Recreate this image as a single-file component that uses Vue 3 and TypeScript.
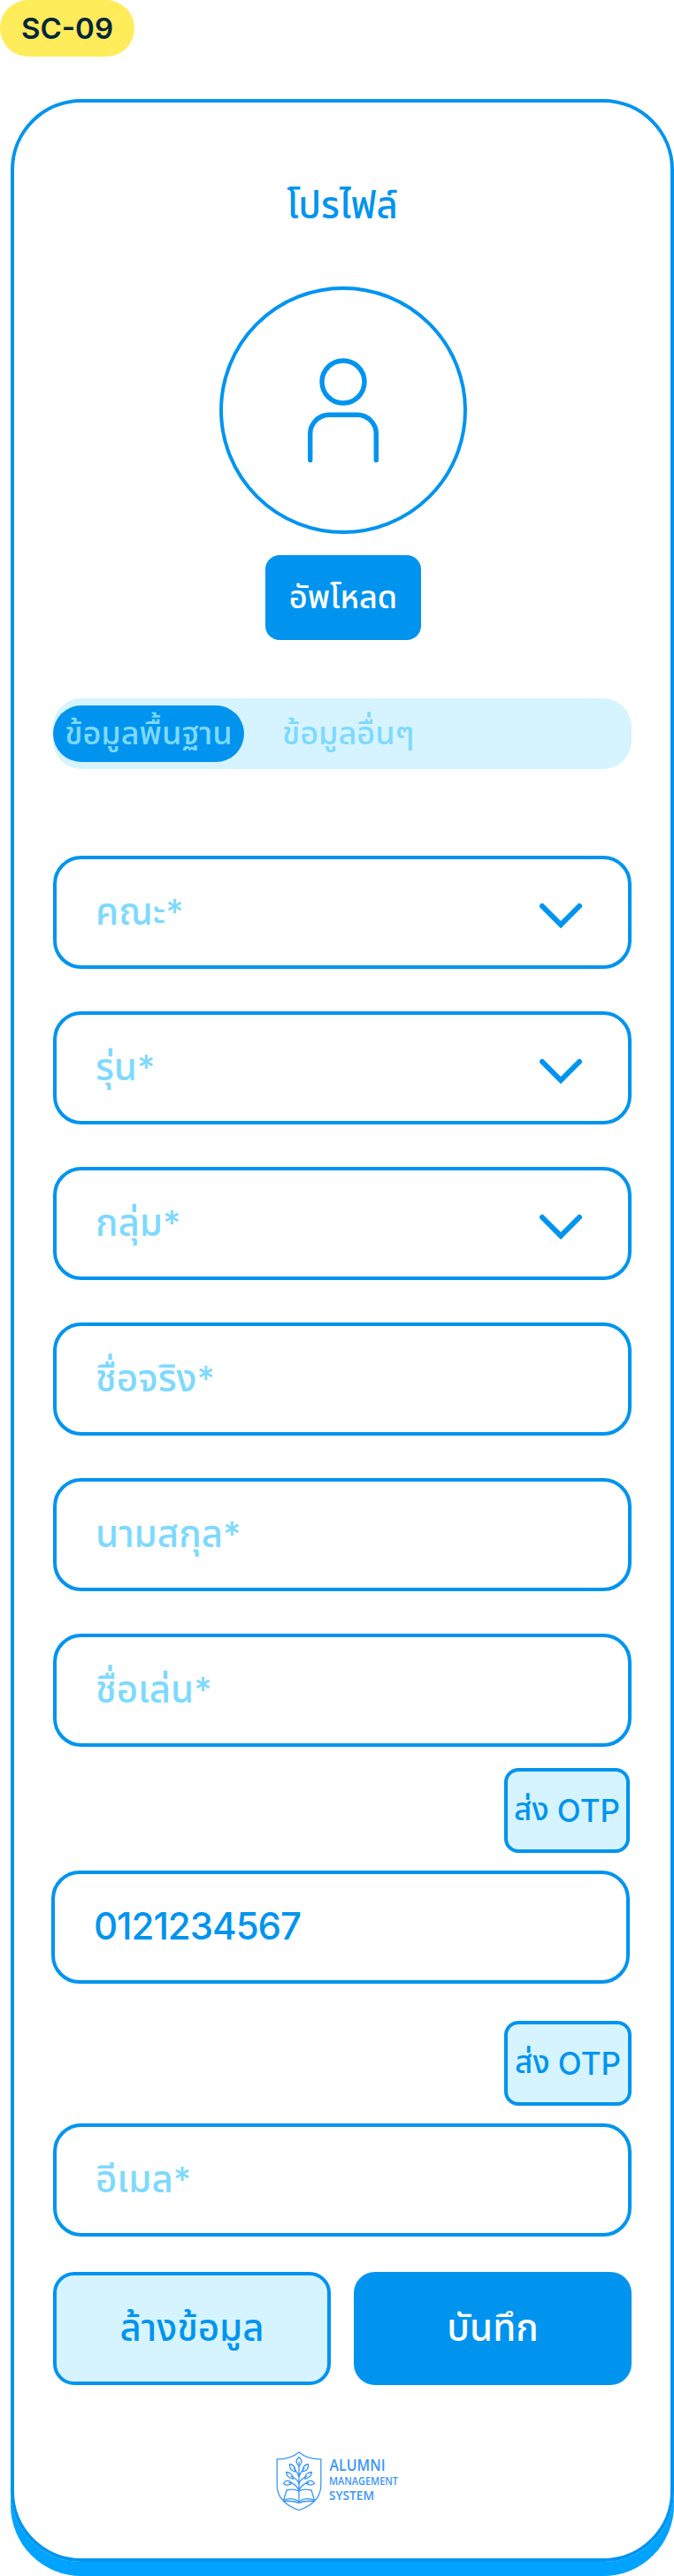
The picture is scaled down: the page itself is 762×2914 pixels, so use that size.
<script setup lang="ts">
interface Field {
  label: string
  select: boolean
}

const fields: Field[] = [
  { label: 'คณะ', select: true },
  { label: 'รุ่น', select: true },
  { label: 'กลุ่ม', select: true },
  { label: 'ชื่อจริง', select: false },
  { label: 'นามสกุล', select: false },
  { label: 'ชื่อเล่น', select: false },
]
const phone = '0121234567'
</script>

<template>
  <div class="page">
    <div class="badge">SC-09</div>
    <main class="card">
      <h1 class="title">โปรไฟล์</h1>
      <div class="avatar">
        <svg width="84" height="130" viewBox="0 0 84 130" fill="none" stroke="currentColor" stroke-width="5.4" stroke-linecap="round">
          <circle cx="42" cy="34" r="24" />
          <path d="M4.7 122.500V93a21.5 21.5 0 0 1 21.5-21.7h31.6A21.5 21.5 0 0 1 79.3 93v29.500" />
        </svg>
      </div>
      <button class="upload">อัพโหลด</button>

      <nav class="tabs">
        <span class="tab active">ข้อมูลพื้นฐาน</span>
        <span class="tab">ข้อมูลอื่นๆ</span>
      </nav>

      <div class="fields">
        <div v-for="f in fields" :key="f.label" class="field">
          <span class="label">{{ f.label }}<span class="star">*</span></span>
          <svg v-if="f.select" class="chevron" width="48" height="30" viewBox="0 0 48 30" fill="none" stroke="currentColor" stroke-width="6" stroke-linecap="round">
            <path d="M3 4L24 25L45 4" />
          </svg>
        </div>
      </div>

      <div class="contact phone">
        <button class="otp">ส่ง&nbsp;<span>OTP</span></button>
        <div class="field"><span class="number">{{ phone }}</span></div>
      </div>
      <div class="contact email">
        <button class="otp">ส่ง&nbsp;<span>OTP</span></button>
        <div class="field"><span class="label">อีเมล<span class="star">*</span></span></div>
      </div>

      <div class="actions">
        <button class="clear">ล้างข้อมูล</button>
        <button class="save">บันทึก</button>
      </div>

      <svg class="logo" width="160" height="68" viewBox="0 0 160 68">
        <g fill="none" stroke="#3b97f5" stroke-width="1.3" stroke-linejoin="round" stroke-linecap="round">
          <path d="M26 1C20 6 11 9 1.2 8.800V38C1.200 52 10 61 26 66.500C42 61 50.800 52 50.800 38V8.800C41 9 32 6 26 1Z" />
          <path d="M26 57V12M26 37C25 32 21 30 17 28M26 37C27 32 31 30 35 28M26 45C24 39 20 36 15 35.500M26 45C28 39 32 36 37 35.500M26 29C25 24 22 22 20 19M26 29C27 24 30 22 32 19" />
          <path d="M26 17C22 13 22 10 26 6.500C30 10 30 13 26 17ZM22 23C17 22 15 19 15.500 14.500C20 15 22 18 22 23ZM30 23C35 22 37 19 36.500 14.500C32 15 30 18 30 23ZM19.500 31C14 30.500 12 28 11.500 23.500C17 24 19 26 19.500 31ZM32.500 31C38 30.500 40 28 40.500 23.500C35 24 33 26 32.500 31ZM18 36C14 39 11 38.500 8.500 36.500C11 32 15 32 18 36ZM34 36C38 39 41 38.500 43.500 36.500C41 32 37 32 34 36Z" />
          <path d="M26 45C21 42 16 43 12 44L8.500 55.500C14 52.500 21 53 26 57C31 53 38 52.500 43.500 55.500L40 44C36 43 31 42 26 45ZM8.500 56.500C15 56 21 56 24 58H28C31 56 37 56 43.500 56.500" />
        </g>
        <g class="wordmark" fill="#3b97f5">
          <text x="60.500" y="22" font-size="18" textLength="63" lengthAdjust="spacingAndGlyphs">ALUMNI</text>
          <text x="60" y="38" font-size="12.500" textLength="78" lengthAdjust="spacingAndGlyphs">MANAGEMENT</text>
          <text x="60" y="55" font-size="14.500" textLength="51" lengthAdjust="spacingAndGlyphs">SYSTEM</text>
        </g>
      </svg>
    </main>
  </div>
</template>

<style>
body {
  margin: 0;
  background: #fff;
}
</style>

<style scoped>
.page {
  width: 762px;
  height: 2914px;
  overflow: hidden;
  color: #0094ef;
  font-family: Inter, "Noto Sans Thai", "Noto Sans", sans-serif;
  font-weight: 500;
}
.page * {
  box-sizing: border-box;
}
button {
  font: inherit;
  color: inherit;
  padding: 0;
  border: 0;
  display: flex;
  align-items: center;
  justify-content: center;
  white-space: nowrap;
}
.badge {
  width: 152px;
  height: 64px;
  border-radius: 32px;
  background: #ffec5b;
  color: #05263b;
  font-size: 33px;
  font-weight: 600;
  line-height: 65px;
  text-align: center;
}
.card {
  width: 750px;
  height: 2786px;
  margin: 48px 0 0 12px;
  padding: 76px 44px 0;
  border: 4px solid #0094ef;
  border-radius: 80px;
  box-shadow: 0 16px 0 #00a3ff;
  display: flex;
  flex-direction: column;
}
.title {
  margin: 0;
  height: 80px;
  line-height: 80px;
  font-size: 42px;
  font-weight: 500;
  text-align: center;
}
.avatar {
  width: 280px;
  height: 280px;
  margin: 52px 0 0 188px;
  border: 4px solid;
  border-radius: 50%;
  display: flex;
  justify-content: center;
}
.avatar svg {
  margin-top: 70px;
  margin-bottom: -10px;
}
.upload {
  width: 176px;
  height: 96px;
  margin: 24px 0 0 240px;
  padding-top: 1px;
  border-radius: 16px;
  background: #0094ef;
  color: #fff;
  font-size: 36px;
}
.tabs {
  display: flex;
  width: 654px;
  height: 80px;
  margin-top: 66px;
  padding: 8px 0;
  border-radius: 32px;
  background: #d6f4ff;
  color: #7dd9ff;
  font-size: 36px;
  line-height: 62px;
}
.tab.active {
  width: 216px;
  margin-right: 43px;
  border-radius: 32px;
  background: #0094ef;
  text-align: center;
}
.fields {
  display: flex;
  flex-direction: column;
  gap: 48px;
  margin-top: 98px;
}
.field {
  display: flex;
  align-items: center;
  width: 654px;
  height: 128px;
  padding: 0 52px 0 44px;
  border: 4px solid;
  border-radius: 32px;
}
.label {
  flex: 1;
  padding-top: 2px;
  color: #7dd9ff;
  font-size: 42px;
}
.star {
  font-size: 39px;
}
.number {
  padding-bottom: 4px;
  font-size: 42px;
  letter-spacing: -1px;
}
.chevron {
  margin-top: 8px;
}
.contact {
  display: flex;
  flex-direction: column;
  align-items: flex-end;
  gap: 20px;
  width: 654px;
}
.phone {
  margin: 24px 0 0 -2px;
}
.email {
  margin-top: 42px;
}
.otp {
  width: 144px;
  height: 96px;
  border: 4px solid;
  border-radius: 16px;
  background: #d6f4ff;
  font-size: 35px;
}
.phone .otp {
  width: 142px;
}
.actions {
  display: flex;
  gap: 26px;
  margin-top: 40px;
}
.actions button {
  width: 314px;
  height: 128px;
  padding-top: 2px;
  border-radius: 24px;
  font-size: 42px;
}
.actions .clear {
  border: 4px solid;
  background: #d6f4ff;
}
.actions .save {
  background: #0094ef;
  color: #fff;
}
.logo {
  margin: 75px 0 0 252px;
  overflow: visible;
}
.wordmark {
  font-family: "Open Sans", sans-serif;
  font-weight: 600;
}
</style>
